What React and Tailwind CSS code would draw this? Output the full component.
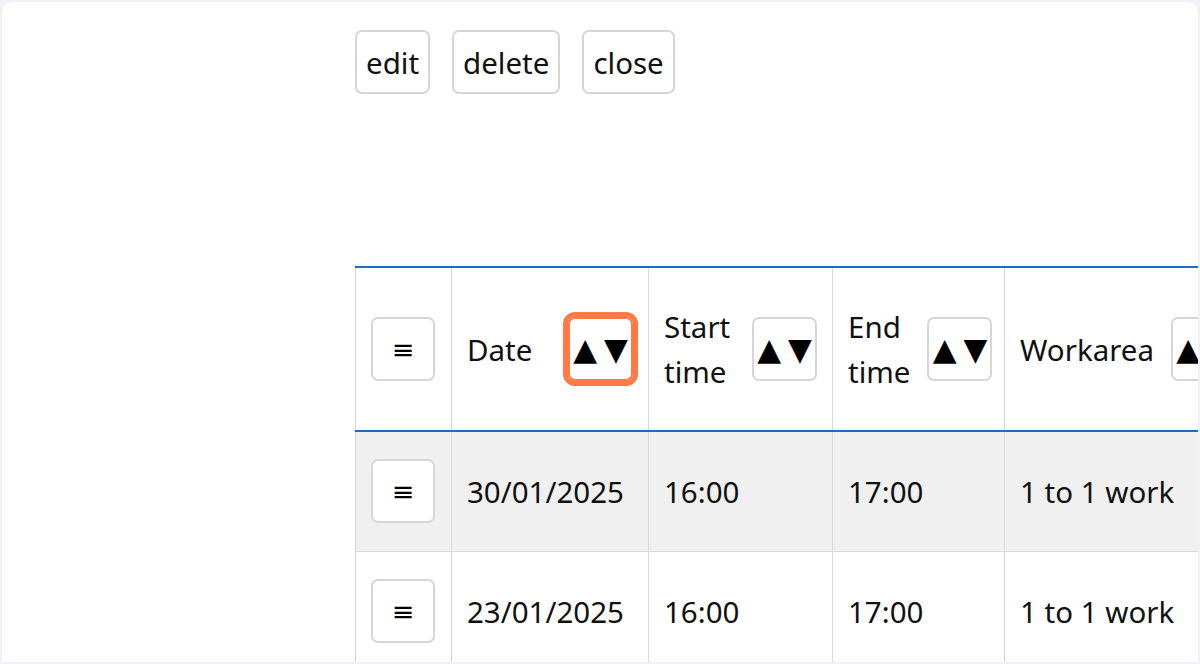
import React from 'react';

const rows = [
  { date: '30/01/2025', start: '16:00', end: '17:00', area: '1 to 1 work' },
  { date: '23/01/2025', start: '16:00', end: '17:00', area: '1 to 1 work' },
];

function SortButton({ focused }) {
  return (
    <button
      className={
        'shrink-0 w-[65px] h-[64px] rounded-[7px] bg-white flex items-center justify-center gap-[7px] font-["DejaVu_Sans"] text-[31px] leading-none text-black ' +
        (focused ? 'border-2 border-[#ff7a45] outline-[5px] outline-solid outline-[#ff7a45]' : 'border-2 border-[#d6d6d6]')
      }
    >
      <span>▲</span>
      <span>▼</span>
    </button>
  );
}

function MenuButton() {
  return (
    <button className="w-[64px] h-[64px] rounded-[7px] border-2 border-[#d6d6d6] bg-white flex items-center justify-center font-['DejaVu_Sans'] text-[27px] leading-none text-black">
      ≡
    </button>
  );
}

export default function App() {
  return (
    <div className="w-[1200px] h-[664px] bg-[#f1f0f6] p-[2px] overflow-hidden">
      <div className="bg-white h-full rounded-t-[10px] overflow-hidden flex font-['Noto_Sans',sans-serif] text-[29.5px] leading-[45px] text-[#111]">
        <div className="w-[353px] shrink-0"></div>
        <div className="flex-1 min-w-0 pt-[28px]">
          {/* acciones */}
          <div className="flex gap-[22px]">
            <button className="h-[64px] px-[9px] rounded-[7px] border-2 border-[#d6d6d6] bg-white">edit</button>
            <button className="h-[64px] px-[9px] rounded-[7px] border-2 border-[#d6d6d6] bg-white">delete</button>
            <button className="h-[64px] px-[9px] rounded-[7px] border-2 border-[#d6d6d6] bg-white">close</button>
          </div>

          <table className="mt-[172px] table-fixed border-collapse w-[1000px] text-left">
            <colgroup>
              <col className="w-[96px]" />
              <col className="w-[197px]" />
              <col className="w-[184px]" />
              <col className="w-[172px]" />
              <col className="w-[351px]" />
            </colgroup>
            <thead>
              <tr className="h-[164px] border-t-2 border-b-2 border-[#1f6db5]">
                <th className="border-l border-r border-[#dadada] font-normal px-[15px]">
                  <MenuButton />
                </th>
                <th className="border-r border-[#dadada] font-normal px-[15px]">
                  <div className="flex items-center justify-between gap-[17px]">
                    <span>Date</span>
                    <SortButton focused />
                  </div>
                </th>
                <th className="border-r border-[#dadada] font-normal px-[15px]">
                  <div className="flex items-center justify-between gap-[17px]">
                    <span>Start time</span>
                    <SortButton />
                  </div>
                </th>
                <th className="border-r border-[#dadada] font-normal px-[15px]">
                  <div className="flex items-center justify-between gap-[17px]">
                    <span>End time</span>
                    <SortButton />
                  </div>
                </th>
                <th className="border-r border-[#dadada] font-normal px-[15px]">
                  <div className="flex items-center gap-[17px]">
                    <span>Workarea</span>
                    <SortButton />
                  </div>
                </th>
              </tr>
            </thead>
            <tbody>
              {rows.map((r, i) => (
                <tr key={i} className={'h-[120px] border-b border-[#dadada] ' + (i === 0 ? 'bg-[#f0f0f0]' : 'bg-white')}>
                  <td className="border-l border-r border-[#dadada] px-[15px]">
                    <MenuButton />
                  </td>
                  <td className="border-r border-[#dadada] px-[15px] whitespace-nowrap">{r.date}</td>
                  <td className="border-r border-[#dadada] px-[15px]">{r.start}</td>
                  <td className="border-r border-[#dadada] px-[15px]">{r.end}</td>
                  <td className="border-r border-[#dadada] px-[15px]">{r.area}</td>
                </tr>
              ))}
            </tbody>
          </table>
        </div>
      </div>
    </div>
  );
}
